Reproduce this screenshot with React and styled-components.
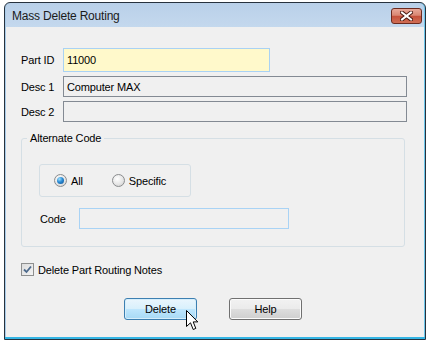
import React from "react";
import styled, { createGlobalStyle } from "styled-components";

const GlobalStyle = createGlobalStyle`
  body {
    margin: 0;
    background: #ffffff;
    font-family: "Liberation Sans", Arial, sans-serif;
    font-size: 11px;
    letter-spacing: -0.15px;
    color: #000000;
  }
`;

const Window = styled.div`
  margin: 2px 0 0 4px;
  width: 422px;
  height: 338px;
  box-sizing: border-box;
  border: 1px solid #27323e;
  border-radius: 6px 6px 0 0;
  background: linear-gradient(to bottom, #b9d0e9 0px, #c5d9ee 26px, #b3d6ee 100%);
  box-shadow: inset 0 -2px 0 #34b5e4, inset 1px 0 0 #a9cce9, inset -1px 0 0 #6cc6ea;
  display: flex;
  flex-direction: column;
  overflow: hidden;
`;

const TitleBar = styled.div`
  height: 24px;
  flex: none;
  display: flex;
  justify-content: space-between;
  align-items: flex-start;
  padding-left: 7px;
`;

const TitleText = styled.div`
  margin-top: 6px;
  font-size: 12px;
  line-height: 14px;
  letter-spacing: -0.2px;
  color: #1b1b1b;
`;

const CloseButton = styled.div`
  margin: 5px 3px 0 0;
  width: 31px;
  height: 16px;
  box-sizing: border-box;
  border: 1px solid #6b2a1f;
  border-radius: 3px;
  background: linear-gradient(to bottom, #e8a899 0%, #d98672 45%, #c5513b 52%, #cf6e55 100%);
  display: flex;
  align-items: center;
  justify-content: center;
`;

const Body = styled.div`
  position: relative;
  flex: 1;
  margin: 0 1px 2px 1px;
  background: #f0f0f0;
  padding: 21px 0 0 15px;
  display: flex;
  flex-direction: column;
`;

const FieldStack = styled.div`
  display: flex;
  flex-direction: column;
  gap: 4px;
`;

const Row = styled.div`
  display: flex;
  align-items: center;
`;

const Label = styled.div`
  width: ${(p) => p.$width || 42}px;
  padding-left: ${(p) => p.$indent || 0}px;
  box-sizing: border-box;
  flex: none;
`;

const TextBox = styled.div`
  width: ${(p) => p.$width}px;
  height: ${(p) => p.$height || 21}px;
  box-sizing: border-box;
  border: 1px solid ${(p) => p.$border || "#838a93"};
  background: ${(p) => p.$bg || "#f0f0f0"};
  padding-left: 3px;
  display: flex;
  align-items: center;
`;

const GroupBox = styled.div`
  position: relative;
  margin-top: 16px;
  width: 384px;
  height: 109px;
  box-sizing: border-box;
  border: 1px solid #d5dfe5;
  border-radius: 3px;
  padding: 25px 0 0 17px;
`;

const Legend = styled.span`
  position: absolute;
  top: -7px;
  left: 5px;
  padding: 0 3px;
  background: #f0f0f0;
  line-height: 13px;
`;

const RadioBox = styled.div`
  width: 152px;
  height: 33px;
  box-sizing: border-box;
  border: 1px solid #d5dfe5;
  border-radius: 3px;
  padding-left: 14px;
  display: flex;
  align-items: center;
  gap: 29px;
`;

const RadioOption = styled.div`
  display: flex;
  align-items: center;
  gap: 4px;
`;

const RadioCircle = styled.span`
  width: 13px;
  height: 13px;
  box-sizing: border-box;
  border-radius: 50%;
  border: 1px solid #8a8c8e;
  background: radial-gradient(circle at 40% 35%, #ffffff 0%, #e6e6e6 55%, #c9c9c9 100%);
  display: flex;
  align-items: center;
  justify-content: center;
  &::after {
    content: "";
    display: ${(p) => (p.$checked ? "block" : "none")};
    width: 7px;
    height: 7px;
    border-radius: 50%;
    background: radial-gradient(circle at 35% 30%, #9fe2ff 0%, #2a8ad4 45%, #0d4f8f 100%);
  }
`;

const CodeRow = styled.div`
  margin-top: 11px;
  display: flex;
  align-items: center;
`;

const CheckRow = styled.div`
  margin-top: 16px;
  display: flex;
  align-items: center;
  gap: 4px;
`;

const CheckBox = styled.span`
  width: 13px;
  height: 13px;
  box-sizing: border-box;
  border: 1px solid #8e8f8f;
  background: linear-gradient(135deg, #dcdcdc 0%, #f4f4f4 100%);
  display: flex;
  align-items: center;
  justify-content: center;
`;

const ButtonRow = styled.div`
  margin-top: 22px;
  padding-left: 103px;
  display: flex;
  gap: 32px;
`;

const Button = styled.div`
  width: 73px;
  height: 22px;
  box-sizing: border-box;
  border-radius: 3px;
  border: 1px solid ${(p) => (p.$active ? "#3c7fb1" : "#707070")};
  background: ${(p) =>
    p.$active
      ? "linear-gradient(to bottom, #eaf6fd 0%, #d9f0fc 48%, #bee6fd 52%, #a7d9f5 100%)"
      : "linear-gradient(to bottom, #f2f2f2 0%, #ebebeb 48%, #dddddd 52%, #cfcfcf 100%)"};
  box-shadow: inset 0 0 0 1px ${(p) => (p.$active ? "#d6eefb" : "#fbfbfb")};
  display: flex;
  align-items: center;
  justify-content: center;
`;

const Cursor = styled.svg`
  position: absolute;
  left: 180px;
  top: 283px;
`;

function App() {
  return (
    <>
      <GlobalStyle />
      <Window>
        <TitleBar>
          <TitleText>Mass Delete Routing</TitleText>
          <CloseButton>
            <svg width="13" height="10" viewBox="0 0 13 10">
              <path d="M2 1.5 L11 8.5 M11 1.5 L2 8.5" stroke="#4a1a12" strokeWidth="4" strokeLinecap="square" />
              <path d="M2 1.5 L11 8.5 M11 1.5 L2 8.5" stroke="#ffffff" strokeWidth="2" strokeLinecap="square" />
            </svg>
          </CloseButton>
        </TitleBar>
        <Body>
          <FieldStack>
            <Row>
              <Label>Part ID</Label>
              <TextBox $width={207} $height={24} $border="#a9d2f4" $bg="#fff9cb">
                11000
              </TextBox>
            </Row>
            <Row>
              <Label>Desc 1</Label>
              <TextBox $width={344}>Computer MAX</TextBox>
            </Row>
            <Row>
              <Label>Desc 2</Label>
              <TextBox $width={344} />
            </Row>
          </FieldStack>

          <GroupBox>
            <Legend>Alternate Code</Legend>
            <RadioBox>
              <RadioOption>
                <RadioCircle $checked />
                All
              </RadioOption>
              <RadioOption>
                <RadioCircle />
                Specific
              </RadioOption>
            </RadioBox>
            <CodeRow>
              <Label $width={40} $indent={1}>Code</Label>
              <TextBox $width={210} $border="#a9d3f5" />
            </CodeRow>
          </GroupBox>

          <CheckRow>
            <CheckBox>
              <svg width="9" height="9" viewBox="0 0 9 9">
                <path d="M1 4.5 L3.5 7 L8 1.5" fill="none" stroke="#4d6a8c" strokeWidth="1.8" />
              </svg>
            </CheckBox>
            Delete Part Routing Notes
          </CheckRow>

          <ButtonRow>
            <Button $active>Delete</Button>
            <Button>Help</Button>
          </ButtonRow>

          <Cursor width="13" height="21" viewBox="0 0 13 21">
            <path
              d="M0.5 0.5 L0.5 16.5 L4.5 12.8 L7.2 19.5 L9.8 18.4 L7.2 11.9 L11.8 11.9 Z"
              fill="#ffffff"
              stroke="#000000"
              strokeWidth="1"
              strokeLinejoin="miter"
            />
          </Cursor>
        </Body>
      </Window>
    </>
  );
}

export default App;
